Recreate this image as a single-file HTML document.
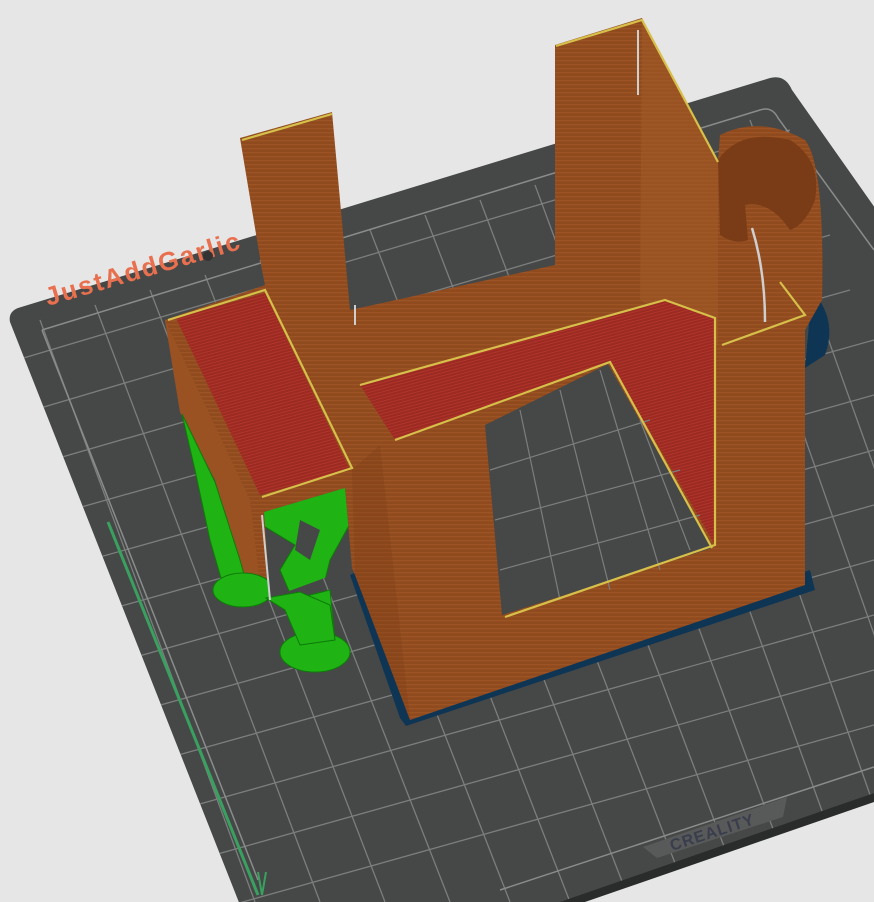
<!DOCTYPE html>
<html><head><meta charset="utf-8"><style>
html,body{margin:0;padding:0;background:#e6e6e6;width:874px;height:902px;overflow:hidden}
svg{display:block}
</style></head><body>
<svg width="874" height="902" viewBox="0 0 874 902" xmlns="http://www.w3.org/2000/svg">
<defs>
<clipPath id="bed"><path d="M18,308 L770,78 Q785,74 792,90 L880,215 L880,791 L560,905 L240,905 L10,322 Q8,312 18,308Z"/></clipPath>
<clipPath id="hole2"><path d="M264,512 L345,488 L352,568 L270,598Z"/></clipPath>
<pattern id="stripe" width="4" height="4" patternUnits="userSpaceOnUse"><rect width="4" height="4" fill="#8f4a1e"/><rect width="4" height="1.3" fill="#9c5424"/></pattern>
<pattern id="red" width="3" height="3" patternUnits="userSpaceOnUse" patternTransform="rotate(-15)"><rect width="3" height="3" fill="#9b2a22"/><rect width="3" height="1" fill="#b0352a"/></pattern>
</defs>
<rect width="874" height="902" fill="#e6e6e6"/>
<path d="M18,308 L770,78 Q785,74 792,90 L880,215 L880,791 L560,905 L240,905 L10,322 Q8,312 18,308Z" fill="#464848"/>
<g clip-path="url(#bed)" stroke="#7c7e7e" stroke-width="1.3" fill="none">
<path d="M40,320 L255,902 M95,305 L320,902 M150,290 L385,902 M205,275 L450,902 M260,260 L510,902 M315,245 L570,902 M370,230 L630,902 M425,215 L690,902 M480,200 L745,902 M535,185 L800,902 M590,170 L855,902 M645,155 L900,880 M700,140 L950,850 M750,120 L1000,820"/>
<path d="M0,365 L790,130 M0,420 L810,180 M0,475 L830,235 M0,530 L850,290 M0,585 L874,340 M0,640 L874,395 M0,695 L874,450 M0,750 L874,505 M0,805 L874,560 M0,860 L874,615 M0,915 L874,670 M0,970 L874,725"/>
</g>
<path d="M42,330 L760,110 Q772,106 778,118 L874,250" fill="none" stroke="#8a8c8c" stroke-width="1.5"/>
<path d="M42,330 L258,880" stroke="#8a8c8c" stroke-width="1.5"/>
<path d="M500,890 L874,767" stroke="#8a8c8c" stroke-width="1.5"/>
<path d="M560,902 L874,793 L874,802 L585,902Z" fill="#2a2c2c"/>
<line x1="108" y1="522" x2="258" y2="895" stroke="#3aa060" stroke-width="3"/>
<path d="M258,872 L262,895 L266,872" stroke="#3aa060" stroke-width="2" fill="none"/>
<text x="48" y="306" transform="rotate(-16.5 48 306)" font-family="Liberation Sans, sans-serif" font-weight="bold" font-size="26" letter-spacing="2" fill="#e8704f">JustAddGarlic</text>
<circle cx="208" cy="256" r="5" fill="#333"/>
<path d="M643,847 L787,797 L783,817 L657,858Z" fill="#585a5a"/>
<text x="672" y="851" transform="rotate(-18 672 851)" font-family="Liberation Sans, sans-serif" font-weight="bold" font-size="16" letter-spacing="1" fill="#3a3d4c">CREALITY</text>
<!-- skirt -->
<path d="M350,575 L400,718 L406,726 L815,590 L810,570 L405,705 L360,570Z" fill="#0f3555"/>
<path d="M812,290 Q838,320 825,355 L805,368Z" fill="#0f3555"/>
<!-- main model body -->
<path d="M240,138 L332,112 L350,310 L555,265 L555,45 L642,18 L718,162 L720,135 Q760,115 805,140 Q825,165 822,300 L805,330 L805,585 L410,720 L355,575 L352,568 L262,600 L250,600 L215,480 L180,412 L165,320 L265,285 L262,270Z" fill="url(#stripe)"/>
<path d="M352,470 L380,445 L410,720 L355,575Z" fill="#7d3f18" opacity=".35"/>
<path d="M165,320 L250,500 L262,600 L250,600 L215,480 L180,412Z" fill="#9a5222"/>
<path d="M642,18 L718,162 L718,345 L640,300Z" fill="#a35a26" opacity=".55"/>
<!-- green left column -->
<g fill="#1fb414" stroke="#0f7a0a" stroke-width="1">
<path d="M182,414 L215,482 L240,560 L250,596 L225,592 L210,540 L195,470Z"/>
<ellipse cx="243" cy="590" rx="30" ry="17"/>
<ellipse cx="315" cy="652" rx="35" ry="20"/>
<path d="M290,600 L330,590 L335,640 L300,645Z"/>
</g>
<!-- box front opening -->
<path d="M264,512 L345,488 L352,568 L270,598Z" fill="#464848"/>
<g clip-path="url(#hole2)" fill="#1fb414" stroke="#0f7a0a" stroke-width="1">
<path d="M262,505 L350,480 L352,520 L330,560 L320,600 L295,605 L280,570 L295,545 L262,525Z"/>
<path d="M300,520 L320,530 L310,560 L295,550Z" fill="#464848" stroke="none"/>
</g>
<path d="M266,598 L300,592 L330,605 L335,640 L300,645 L285,610Z" fill="#1fb414" stroke="#0f7a0a"/>
<!-- cylinder inside -->
<path d="M718,160 Q740,128 790,140 Q822,160 815,200 Q805,225 790,230 Q770,200 745,205 L748,240 Q735,245 720,235Z" fill="#7a3c16"/>
<!-- red floors -->
<path d="M176,318 L265,293 L350,470 L260,495Z" fill="url(#red)"/>
<path d="M360,385 L665,300 L715,318 L715,545 L610,362 L395,440Z" fill="url(#red)"/>
<!-- hole showing bed -->
<path d="M485,425 L608,364 L712,548 L502,615Z" fill="#464848"/>
<g stroke="#7c7e7e" stroke-width="1.2" fill="none" clip-path="url(#bed)">
<path d="M520,410 L560,600 M560,390 L610,590 M600,370 L660,570 M640,420 L690,550 M490,470 L650,420 M495,520 L680,470 M500,570 L700,515"/>
</g>
<!-- yellow edges -->
<g stroke="#d6c04a" stroke-width="2.2" fill="none">
<path d="M242,140 L332,114"/>
<path d="M556,46 L642,20 L718,162"/>
<path d="M168,320 L265,290 L352,468 L262,497"/>
<path d="M360,385 L665,300 L715,318 L715,545 L505,617"/>
<path d="M395,440 L610,362 L712,548"/>
<path d="M780,282 L805,315 L722,345"/>
</g>
<line x1="638" y1="30" x2="638" y2="95" stroke="#cfcfcf" stroke-width="2"/>
<path d="M752,228 Q765,270 765,322" stroke="#cfcfcf" stroke-width="2.5" fill="none"/>
<line x1="355" y1="305" x2="355" y2="325" stroke="#cfcfcf" stroke-width="2"/>
<line x1="262" y1="515" x2="270" y2="600" stroke="#cfcfcf" stroke-width="2"/>
</svg>
</body></html>
